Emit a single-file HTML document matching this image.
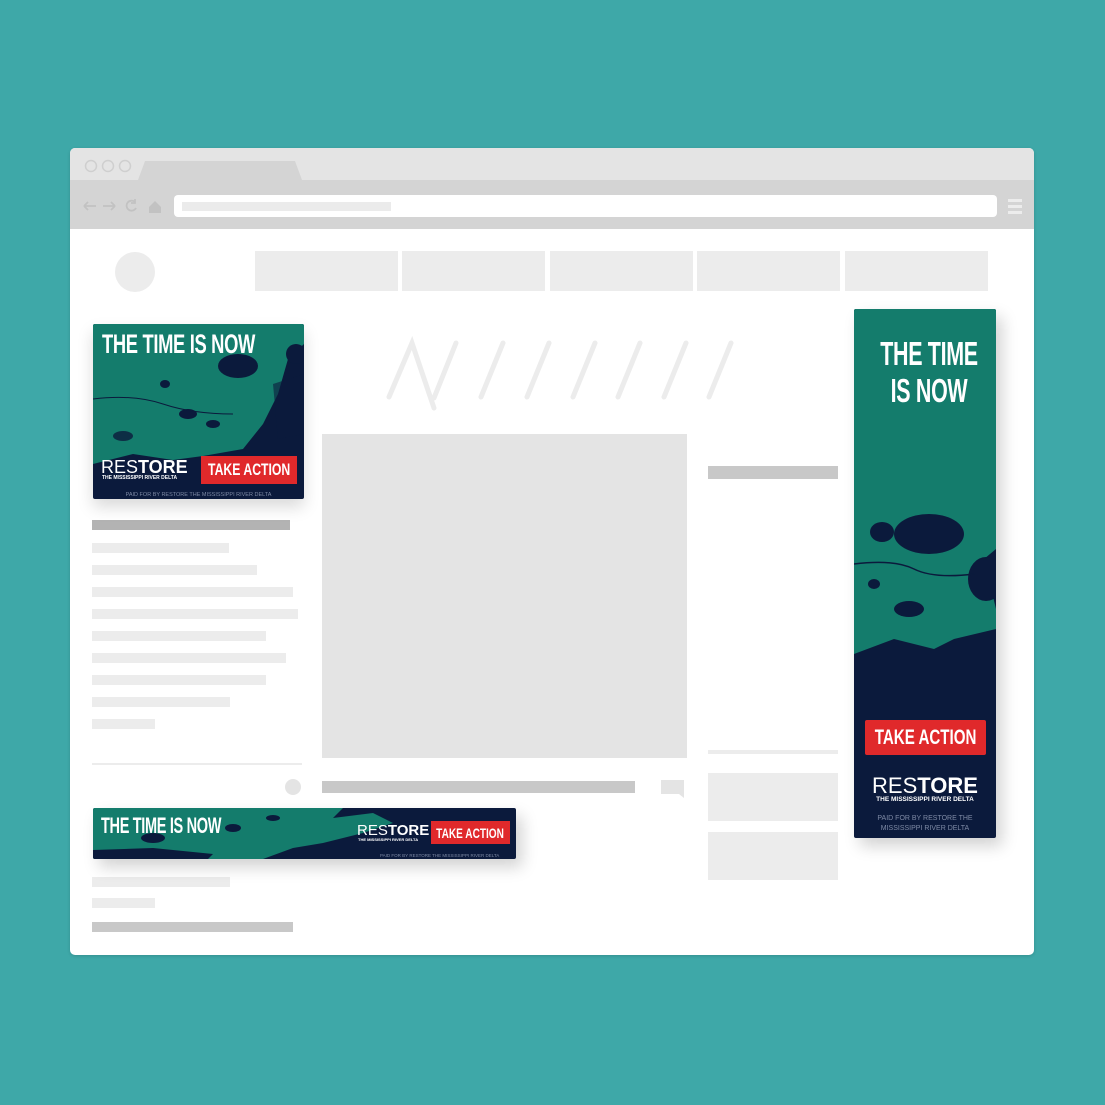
<!DOCTYPE html>
<html><head><meta charset="utf-8"><style>
*{margin:0;padding:0;box-sizing:border-box}
body{width:1105px;height:1105px;background:#3ea8a8;position:relative;overflow:hidden;font-family:"Liberation Sans",sans-serif}
.a{position:absolute}
.g{background:#ececec}
.d{background:#c8c8c8}
.h{font-family:"Liberation Sans Narrow","Liberation Sans",sans-serif;font-weight:bold;color:#fff;white-space:nowrap;letter-spacing:-0.5px}
.btn{background:#e0292b;color:#fff;font-family:"Liberation Sans Narrow","Liberation Sans",sans-serif;font-weight:bold;white-space:nowrap;display:flex;justify-content:center;align-items:center}
.btn span{display:block;flex:none;transform:scaleX(.72)}
.rs{color:#fff;white-space:nowrap;line-height:1}
.rs b{font-weight:bold}
.sub{color:#fff;font-weight:bold;white-space:nowrap}
.paid{color:#7e8aa5;white-space:nowrap;text-align:center}
</style></head><body>
<div class="a" style="left:70px;top:148px;width:964px;height:807px;background:#fff;border-radius:5px;overflow:hidden;box-shadow:0 1px 3px rgba(0,0,0,.15)">
  <div class="a" style="left:0;top:0;width:964px;height:32px;background:#e4e4e4"></div>
  <svg class="a" style="left:0;top:0" width="300" height="32"><circle cx="21" cy="18" r="5.5" fill="none" stroke="#cfcfcf" stroke-width="1.5"/><circle cx="38" cy="18" r="5.5" fill="none" stroke="#cfcfcf" stroke-width="1.5"/><circle cx="55" cy="18" r="5.5" fill="none" stroke="#cfcfcf" stroke-width="1.5"/><polygon points="68,32 75,13 225,13 232,32" fill="#d4d4d4"/></svg>
  <div class="a" style="left:0;top:32px;width:964px;height:49px;background:#d4d4d4"></div>
  <svg class="a" style="left:12px;top:48px" width="80" height="20" fill="none" stroke="#c2c2c2" stroke-width="1.8"><path d="M2 10H14M2 10l4-4M2 10l4 4"/><path d="M21 10H33M33 10l-4-4M33 10l-4 4"/><path d="M53 6a5 5 0 1 0 1 6"/><path d="M53 3v4h-4" /><path d="M67 11l6-6 6 6v6h-12z" fill="#c2c2c2" stroke="none"/></svg>
  <div class="a" style="left:104px;top:47px;width:823px;height:22px;background:#fff;border-radius:4px"></div>
  <div class="a" style="left:112px;top:54px;width:209px;height:9px;background:#ebebeb"></div>
  <div class="a" style="left:938px;top:51px;width:14px;height:3px;background:#ececec"></div>
  <div class="a" style="left:938px;top:57px;width:14px;height:3px;background:#ececec"></div>
  <div class="a" style="left:938px;top:63px;width:14px;height:3px;background:#ececec"></div>
</div>
<div class="a g" style="left:115px;top:252px;width:40px;height:40px;border-radius:50%"></div>
<div class="a g" style="left:255px;top:251px;width:143px;height:40px"></div>
<div class="a g" style="left:402px;top:251px;width:143px;height:40px"></div>
<div class="a g" style="left:550px;top:251px;width:143px;height:40px"></div>
<div class="a g" style="left:697px;top:251px;width:143px;height:40px"></div>
<div class="a g" style="left:845px;top:251px;width:143px;height:40px"></div>
<svg class="a" style="left:370px;top:330px" width="380" height="90" fill="none" stroke="#ececec" stroke-width="5" stroke-linecap="round"><path d="M19 67L42 13L64 78M64 68L86 13"/><path d="M111 67L133 13M157 67L179 13M203 67L225 13M248 67L270 13M294 67L316 13M339 67L361 13"/></svg>
<div class="a" style="left:322px;top:434px;width:365px;height:324px;background:#e4e4e4"></div>
<div class="a" style="left:92px;top:520px;width:198px;height:10px;background:#b3b3b3"></div>
<div class="a g" style="left:92px;top:543px;width:137px;height:10px"></div>
<div class="a g" style="left:92px;top:565px;width:165px;height:10px"></div>
<div class="a g" style="left:92px;top:587px;width:201px;height:10px"></div>
<div class="a g" style="left:92px;top:609px;width:206px;height:10px"></div>
<div class="a g" style="left:92px;top:631px;width:174px;height:10px"></div>
<div class="a g" style="left:92px;top:653px;width:194px;height:10px"></div>
<div class="a g" style="left:92px;top:675px;width:174px;height:10px"></div>
<div class="a g" style="left:92px;top:697px;width:138px;height:10px"></div>
<div class="a g" style="left:92px;top:719px;width:63px;height:10px"></div>
<div class="a g" style="left:92px;top:763px;width:210px;height:2px"></div>
<div class="a" style="left:285px;top:779px;width:16px;height:16px;border-radius:50%;background:#e4e4e4"></div>
<div class="a d" style="left:322px;top:781px;width:313px;height:12px"></div>
<svg class="a" style="left:661px;top:780px" width="24" height="18"><path d="M0 0H23V18L18 14H0Z" fill="#e4e4e4"/></svg>
<div class="a g" style="left:92px;top:877px;width:138px;height:10px"></div>
<div class="a g" style="left:92px;top:898px;width:63px;height:10px"></div>
<div class="a d" style="left:92px;top:922px;width:201px;height:10px"></div>
<div class="a d" style="left:708px;top:466px;width:130px;height:13px"></div>
<div class="a g" style="left:708px;top:750px;width:130px;height:4px"></div>
<div class="a g" style="left:708px;top:773px;width:130px;height:48px"></div>
<div class="a g" style="left:708px;top:832px;width:130px;height:48px"></div>

<!-- left ad -->
<div class="a" style="left:93px;top:324px;width:211px;height:175px;background:#0b1a3c;border-radius:2px;overflow:hidden;box-shadow:0 8px 16px rgba(0,0,0,.15)">
  <svg class="a" style="left:0;top:0" width="211" height="175"><path d="M0 0H211V20L195 35L185 70L170 100L150 125L110 132L80 136L40 130L0 140Z" fill="#147c6c"/><ellipse cx="145" cy="42" rx="20" ry="12" fill="#0b1a3c"/><ellipse cx="203" cy="30" rx="10" ry="10" fill="#0b1a3c"/><ellipse cx="95" cy="90" rx="9" ry="5" fill="#0b1a3c"/><ellipse cx="72" cy="60" rx="5" ry="4" fill="#0b1a3c"/><ellipse cx="30" cy="112" rx="10" ry="5" fill="#0b1a3c" opacity=".8"/><ellipse cx="120" cy="100" rx="7" ry="4" fill="#0b1a3c"/><path d="M0 75Q40 70 70 80T140 90" stroke="#0b1a3c" stroke-width="1" fill="none"/><path d="M180 60L211 50V110L185 115Z" fill="#0b1a3c" opacity=".6"/></svg>
  <div class="a h" style="left:9px;top:5px;font-size:27px;transform:scaleX(.68);transform-origin:left top">THE TIME IS NOW</div>
  <div class="a rs" style="left:8px;top:134px;font-size:18px"><span style="font-weight:normal">RES</span><b>TORE</b></div>
  <div class="a sub" style="left:9px;top:151px;font-size:5px">THE MISSISSIPPI RIVER DELTA</div>
  <div class="a btn" style="left:108px;top:132px;width:96px;height:28px;font-size:17px"><span>TAKE ACTION</span></div>
  <div class="a paid" style="left:0;top:168px;width:211px;font-size:5.5px">PAID FOR BY RESTORE THE MISSISSIPPI RIVER DELTA</div>
</div>

<!-- skyscraper -->
<div class="a" style="left:854px;top:309px;width:142px;height:529px;background:#0b1a3c;border-radius:2px;overflow:hidden;box-shadow:6px 8px 16px rgba(0,0,0,.18)">
  <svg class="a" style="left:0;top:0" width="142" height="420"><path d="M0 0H142V240L130 250L142 300V330L120 350L90 360L60 380L30 395L0 400Z" fill="#147c6c"/><ellipse cx="75" cy="225" rx="35" ry="20" fill="#0b1a3c"/><ellipse cx="28" cy="223" rx="12" ry="10" fill="#0b1a3c"/><ellipse cx="132" cy="270" rx="18" ry="22" fill="#0b1a3c"/><ellipse cx="55" cy="300" rx="15" ry="8" fill="#0b1a3c"/><ellipse cx="20" cy="275" rx="6" ry="5" fill="#0b1a3c"/><path d="M0 345L40 330L80 340L100 330L142 320V420H0Z" fill="#0b1a3c"/><path d="M0 255Q40 250 60 260T120 265" stroke="#0b1a3c" stroke-width="1.5" fill="none"/></svg>
  <div class="a h" style="left:0;top:26px;width:142px;text-align:center;font-size:33px;line-height:37px"><span style="display:inline-block;transform:scaleX(.65)">THE TIME<br>IS NOW</span></div>
  <div class="a btn" style="left:11px;top:411px;width:121px;height:35px;font-size:21px;border-radius:2px"><span>TAKE ACTION</span></div>
  <div class="a rs" style="left:0;top:466px;width:142px;text-align:center;font-size:22px"><span style="font-weight:normal">RES</span><b>TORE</b></div>
  <div class="a sub" style="left:0;top:487px;width:142px;text-align:center;font-size:6.5px">THE MISSISSIPPI RIVER DELTA</div>
  <div class="a paid" style="left:0;top:505px;width:142px;font-size:7px;line-height:10px">PAID FOR BY RESTORE THE<br>MISSISSIPPI RIVER DELTA</div>
</div>

<!-- leaderboard -->
<div class="a" style="left:93px;top:808px;width:423px;height:51px;background:#0b1a3c;border-radius:2px;overflow:hidden;box-shadow:6px 8px 16px rgba(0,0,0,.18)">
  <svg class="a" style="left:0;top:0" width="423" height="51"><path d="M0 0H250L240 10L280 5L300 15L270 25L230 35L200 40L170 51H0Z" fill="#147c6c"/><ellipse cx="60" cy="30" rx="12" ry="5" fill="#0b1a3c"/><ellipse cx="140" cy="20" rx="8" ry="4" fill="#0b1a3c"/><ellipse cx="180" cy="10" rx="7" ry="3" fill="#0b1a3c"/><path d="M0 42L60 40L120 46L115 51H0Z" fill="#0b1a3c"/></svg>
  <div class="a h" style="left:8px;top:5px;font-size:22px;transform:scaleX(.66);transform-origin:left top">THE TIME IS NOW</div>
  <div class="a rs" style="left:264px;top:15px;font-size:15px"><span style="font-weight:normal">RES</span><b>TORE</b></div>
  <div class="a sub" style="left:265px;top:29px;font-size:4px">THE MISSISSIPPI RIVER DELTA</div>
  <div class="a btn" style="left:338px;top:13px;width:79px;height:23px;font-size:14px"><span>TAKE ACTION</span></div>
  <div class="a paid" style="left:287px;top:45px;font-size:4.5px">PAID FOR BY RESTORE THE MISSISSIPPI RIVER DELTA</div>
</div>
</body></html>
